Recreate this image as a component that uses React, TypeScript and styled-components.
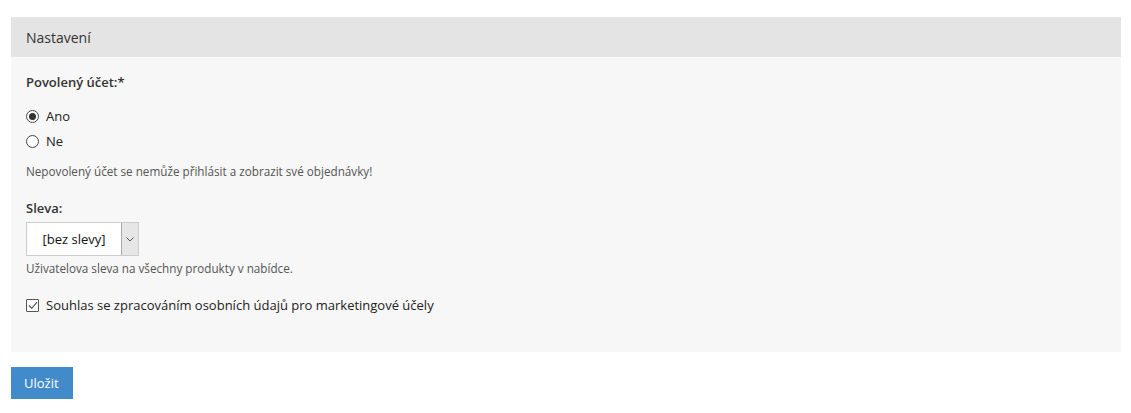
import React from "react"
import styled, { createGlobalStyle } from "styled-components"

const Global = createGlobalStyle`
  body {
    margin: 0;
    background: #fff;
    font-family: "Open Sans", "Noto Sans", Arial, sans-serif;
    color: #222;
  }
`

const Page = styled.div`
  padding: 17px 10px 14px 11px;
`

const Panel = styled.div`
  background: #f7f7f7;
`

const PanelHead = styled.div`
  height: 40px;
  background: #e4e4e4;
  display: flex;
  align-items: center;
  padding-left: 15px;
  font-size: 14px;
  color: #333;
`

const PanelBody = styled.div`
  padding: 16px 15px 38px 15px;
`

const Label = styled.div`
  font-size: 13px;
  font-weight: 600;
  color: #333;
  line-height: 18px;
`

const Choices = styled.div`
  display: flex;
  flex-direction: column;
  gap: 7px;
  margin-top: 16px;
`

const Choice = styled.label`
  display: flex;
  align-items: center;
  gap: 7px;
  font-size: 13px;
  line-height: 18px;
  color: #222;
`

const RadioMark = styled.span<{ $on?: boolean }>`
  width: 11px;
  height: 11px;
  border: 1px solid #444;
  border-radius: 50%;
  background: #fff;
  display: inline-flex;
  align-items: center;
  justify-content: center;
  &::after {
    content: "";
    width: 7px;
    height: 7px;
    border-radius: 50%;
    background: ${p => (p.$on ? "#333" : "transparent")};
  }
`

const CheckMark = styled.span`
  width: 11px;
  height: 11px;
  border: 1px solid #555;
  border-radius: 1px;
  background: #fff;
  display: inline-flex;
  align-items: center;
  justify-content: center;
`

const Help = styled.div<{ $top: number }>`
  font-size: 11.7px;
  color: #555;
  line-height: 16px;
  margin-top: ${p => p.$top}px;
`

const Group = styled.div<{ $top: number }>`
  margin-top: ${p => p.$top}px;
`

const SelectBox = styled.div`
  display: flex;
  width: 113px;
  height: 34px;
  margin-top: 5px;
  box-sizing: border-box;
  border: 1px solid #ccc;
  background: #fff;
`

const SelectValue = styled.div`
  flex: 1;
  display: flex;
  align-items: center;
  justify-content: center;
  font-size: 13px;
  color: #111;
`

const SelectArrow = styled.div`
  width: 16px;
  display: flex;
  align-items: center;
  justify-content: center;
  background: #e6e6e6;
  border-left: 1px solid #aaa;
`

const SaveButton = styled.button`
  margin-top: 15px;
  height: 32px;
  padding: 0 14px 0 13px;
  border: none;
  background: #428bca;
  color: #fff;
  font-family: inherit;
  font-size: 13px;
  cursor: pointer;
`

export default function App() {
  return (
    <Page>
      <Global />
      <Panel>
        <PanelHead>Nastavení</PanelHead>
        <PanelBody>
          <Label>Povolený účet:*</Label>
          <Choices>
            <Choice>
              <RadioMark $on />
              Ano
            </Choice>
            <Choice>
              <RadioMark />
              Ne
            </Choice>
          </Choices>
          <Help $top={13}>Nepovolený účet se nemůže přihlásit a zobrazit své objednávky!</Help>

          <Group $top={20}>
            <Label>Sleva:</Label>
            <SelectBox>
              <SelectValue>[bez slevy]</SelectValue>
              <SelectArrow>
                <svg width="8" height="5" viewBox="0 0 8 5">
                  <path d="M0.5 0.5 L4 4 L7.5 0.5" fill="none" stroke="#555" strokeWidth="1" />
                </svg>
              </SelectArrow>
            </SelectBox>
            <Help $top={4}>Uživatelova sleva na všechny produkty v nabídce.</Help>
          </Group>

          <Group $top={20}>
            <Choice>
              <CheckMark>
                <svg width="10" height="9" viewBox="0 0 10 9">
                  <path d="M1 4.5 L3.8 7.3 L9 1.2" fill="none" stroke="#444" strokeWidth="1.1" />
                </svg>
              </CheckMark>
              Souhlas se zpracováním osobních údajů pro marketingové účely
            </Choice>
          </Group>
        </PanelBody>
      </Panel>
      <SaveButton>Uložit</SaveButton>
    </Page>
  )
}
